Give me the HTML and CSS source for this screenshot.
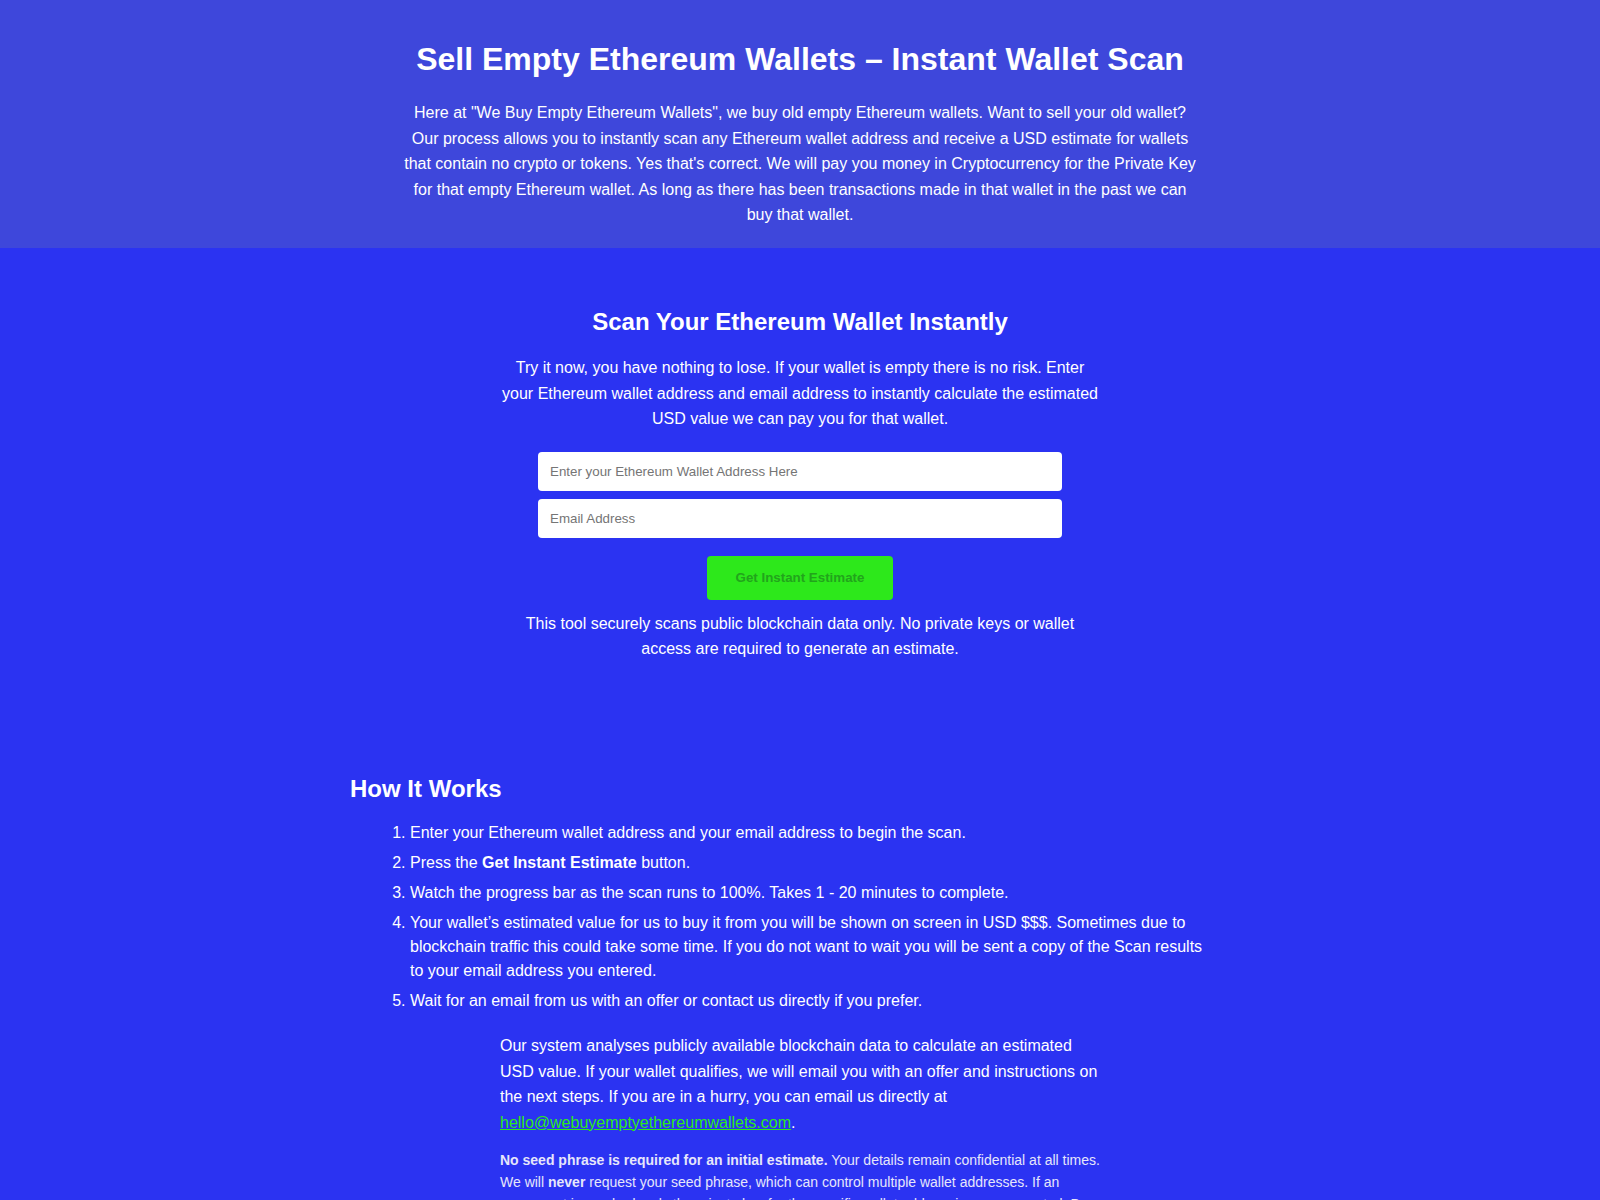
FILE: index.html
```html
<!DOCTYPE html>
<html lang="en">
<head>
  <meta charset="UTF-8" />
  <title>Sell Empty Ethereum Wallets</title>
  <link rel="stylesheet" href="styles.css">
</head>
<body>
  <!-- Topo da página -->
  <header class="hero">
    <div class="hero-inner">
      <h1>Sell Empty Ethereum Wallets – Instant Wallet Scan</h1>
      <p>Here at "We Buy Empty Ethereum Wallets", we buy old empty Ethereum wallets. Want to sell your old wallet? Our process allows you to instantly scan any Ethereum wallet address and receive a USD estimate for wallets that contain no crypto or tokens. Yes that's correct. We will pay you money in Cryptocurrency for the Private Key for that empty Ethereum wallet. As long as there has been transactions made in that wallet in the past we can buy that wallet.</p>
    </div>
  </header>

  <!-- Scanner -->
  <section class="scan">
    <h2>Scan Your Ethereum Wallet Instantly</h2>
    <p>Try it now, you have nothing to lose. If your wallet is empty there is no risk. Enter your Ethereum wallet address and email address to instantly calculate the estimated USD value we can pay you for that wallet.</p>
    <form class="scan-form" onsubmit="return false;">
      <input type="text" placeholder="Enter your Ethereum Wallet Address Here">
      <input type="email" placeholder="Email Address">
      <button type="submit">Get Instant Estimate</button>
    </form>
    <p>This tool securely scans public blockchain data only. No private keys or wallet access are required to generate an estimate.</p>
  </section>

  <!-- Como funciona -->
  <section class="how">
    <h2>How It Works</h2>
    <ol>
      <li>Enter your Ethereum wallet address and your email address to begin the scan.</li>
      <li>Press the <strong>Get Instant Estimate</strong> button.</li>
      <li>Watch the progress bar as the scan runs to 100%. Takes 1 - 20 minutes to complete.</li>
      <li>Your wallet’s estimated value for us to buy it from you will be shown on screen in USD $$$. Sometimes due to blockchain traffic this could take some time. If you do not want to wait you will be sent a copy of the Scan results to your email address you entered.</li>
      <li>Wait for an email from us with an offer or contact us directly if you prefer.</li>
    </ol>

    <div class="notes">
      <p>Our system analyses publicly available blockchain data to calculate an estimated USD value. If your wallet qualifies, we will email you with an offer and instructions on the next steps. If you are in a hurry, you can email us directly at <a href="mailto:hello@webuyemptyethereumwallets.com">hello@webuyemptyethereumwallets.com</a>.</p>
      <p class="small"><strong>No seed phrase is required for an initial estimate.</strong> Your details remain confidential at all times. We will <strong>never</strong> request your seed phrase, which can control multiple wallet addresses. If an agreement is reached, only the private key for the specific wallet address is ever requested. Do not share it before that.</p>
    </div>
  </section>
</body>
</html>
```

FILE: styles.css
```css
/* Estilo geral */
body {
  margin: 0;
  font-family: "Liberation Sans", Arial, sans-serif;
  background-color: #2b33f2;
  color: #fff;
}

.hero {
  background-color: #3e47db;
  padding: 41px 20px 20px;
}

.hero-inner {
  max-width: 800px;
  margin: auto;
  text-align: center;
}

.hero h1 {
  font-size: 32px;
  margin: 0 0 22px;
}

.hero p {
  font-size: 16px;
  line-height: 1.6;
  margin: 0;
}

.scan {
  max-width: 600px;
  margin: auto;
  padding: 40px 20px 0;
  text-align: center;
}

.scan h2 {
  font-size: 24px;
  margin: 20px 0 19px;
}

.scan p {
  font-size: 16px;
  line-height: 1.6;
  margin: 0;
}

.scan-form {
  display: flex;
  flex-direction: column;
  align-items: center;
  gap: 8px;
  margin: 20px 0 11px;
}

.scan-form input {
  width: 524px;
  box-sizing: border-box;
  padding: 12px;
  border: none;
  border-radius: 4px;
  font-family: inherit;
  font-size: 13.33px;
  background: #fff;
}

.scan-form input::placeholder {
  color: #757575;
}

.scan-form button {
  margin-top: 10px;
  padding: 14px 29px 15px;
  border: none;
  border-radius: 4px;
  background-color: #2de81b;
  color: #22a41c;
  font-family: inherit;
  font-size: 13.33px;
  font-weight: bold;
  cursor: pointer;
}

.how {
  max-width: 900px;
  margin: auto;
  padding: 113px 0 40px;
}

.how h2 {
  font-size: 24px;
  margin: 0 0 18px;
}

.how ol {
  padding-left: 60px;
  margin: 0 34px 20px 0;
  font-size: 16px;
  line-height: 1.5;
}

.how li {
  margin-bottom: 6px;
}

.notes {
  max-width: 600px;
  margin: auto;
}

.notes p {
  font-size: 16px;
  line-height: 1.6;
  margin: 0 0 15px;
}

.notes a {
  color: #2de81b;
}

.notes p.small {
  font-size: 14px;
  line-height: 1.55;
  color: #e6e6fb;
}
```
